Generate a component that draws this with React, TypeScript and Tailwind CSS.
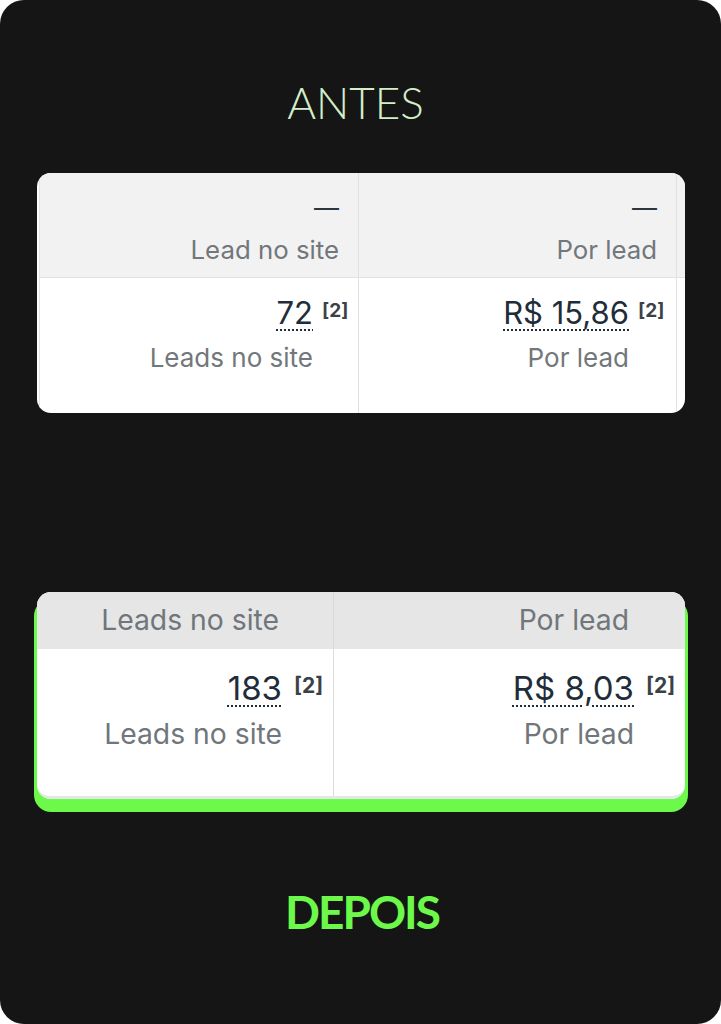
const table = "font-['Inter','Liberation_Sans',sans-serif]"

function Value({ text, big }: { text: string; big?: boolean }) {
    return (
        <span className="relative inline-block">
            <span
                className={`${big ? "text-[33px] leading-[38px]" : "text-[31px] leading-[36px]"} text-[#1f2d3a] underline decoration-dotted decoration-[2px] underline-offset-[5px]`}
            >
                {text}
            </span>
            <sup
                className={`absolute left-full font-bold text-[#3b4148] ${big ? "top-[5px] ml-[12px] text-[21px] leading-[24px]" : "top-[5px] ml-[9px] text-[19px] leading-[22px]"}`}
            >
                [2]
            </sup>
        </span>
    )
}

function BeforeCard() {
    return (
        <div className={`ml-[37px] w-[648px] rounded-[14px] overflow-hidden bg-white pl-[2px] ${table}`}>
            <div className="grid grid-cols-[319px_318px_1fr] border-l border-[#e3e3e3]">
                {/* header */}
                <div className="bg-[#f2f2f2] border-b border-r border-[#e1e1e1] pt-[20px] pb-[12px] pr-[19px] flex flex-col items-end">
                    <span className="text-[25px] leading-[30px] text-[#2b3640]">—</span>
                    <span className="mt-[12px] text-[25.8px] leading-[30px] text-[#72777c]">Lead no site</span>
                </div>
                <div className="bg-[#f2f2f2] border-b border-r border-[#e1e1e1] pt-[20px] pb-[12px] pr-[19px] flex flex-col items-end">
                    <span className="text-[25px] leading-[30px] text-[#2b3640]">—</span>
                    <span className="mt-[12px] text-[25.8px] leading-[30px] text-[#72777c]">Por lead</span>
                </div>
                <div className="bg-[#f2f2f2] border-b border-[#e1e1e1]" />

                {/* body */}
                <div className="border-r border-[#e1e1e1] pt-[17px] pb-[40px] pr-[45px] flex flex-col items-end">
                    <Value text="72" />
                    <span className="mt-[12px] text-[26px] leading-[30px] text-[#72777c]">Leads no site</span>
                </div>
                <div className="border-r border-[#e1e1e1] pt-[17px] pb-[40px] pr-[47px] flex flex-col items-end">
                    <Value text="R$ 15,86" />
                    <span className="mt-[12px] text-[26px] leading-[30px] text-[#72777c]">Por lead</span>
                </div>
                <div />
            </div>
        </div>
    )
}

function AfterCard() {
    return (
        <div
            className={`ml-[37px] w-[648px] rounded-[14px] bg-white shadow-[0_10px_0_3px_#6cf94a] ${table}`}
        >
            <div className="grid grid-cols-[297px_351px] rounded-[14px] overflow-hidden border-b-[3px] border-[#e6e6e6]">
                <div className="h-[57px] bg-[#e6e6e6] border-r border-[#d9d9d9] flex items-center justify-end pr-[54px]">
                    <span className="text-[28.3px] leading-[33px] text-[#70767b]">Leads no site</span>
                </div>
                <div className="h-[57px] bg-[#e6e6e6] flex items-center justify-end pr-[56px]">
                    <span className="text-[28.3px] leading-[33px] text-[#70767b]">Por lead</span>
                </div>

                <div className="border-r border-[#dcdcdc] pt-[20px] pb-[45px] pr-[51px] flex flex-col items-end">
                    <Value text="183" big />
                    <span className="mt-[11px] text-[28.3px] leading-[33px] text-[#70767b]">Leads no site</span>
                </div>
                <div className="pt-[20px] pb-[45px] pr-[51px] flex flex-col items-end">
                    <Value text="R$ 8,03" big />
                    <span className="mt-[11px] text-[28.3px] leading-[33px] text-[#70767b]">Por lead</span>
                </div>
            </div>
        </div>
    )
}

export default function App() {
    return (
        <div className="w-[721px] h-[1024px] bg-white">
            <div className="w-[721px] h-[1024px] bg-[#151515] rounded-[24px] flex flex-col pt-[80px]">
                <h1 className="text-center pr-[10px] font-['Lato',sans-serif] font-light text-[44px] leading-[44px] text-[#d3eec8]">
                    ANTES
                </h1>

                <div className="mt-[49px]">
                    <BeforeCard />
                </div>

                <div className="mt-[179px]">
                    <AfterCard />
                </div>

                <h2 className="mt-[90px] text-center pl-[3px] font-['Lato',sans-serif] font-bold text-[46px] leading-[46px] tracking-[-2px] text-[#6cf94a]">
                    DEPOIS
                </h2>
            </div>
        </div>
    )
}
